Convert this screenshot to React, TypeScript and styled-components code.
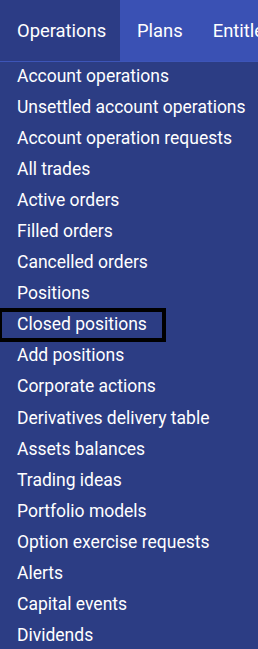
import React from 'react';
import styled, {createGlobalStyle} from "styled-components";

const GlobalStyle = createGlobalStyle`
    html, body {
        margin: 0;
        padding: 0;
        background: #2b2b2b;
        font-family: 'Roboto', 'Liberation Sans', sans-serif;
    }
`;

const PageWrapper = styled.div`
    width: 258px;
    height: 649px;
    overflow: hidden;
    display: flex;
    flex-direction: column;
`;

const TopBar = styled.nav`
    display: flex;
    height: 61px;
    flex-shrink: 0;
    background: #3a51b4;
    white-space: nowrap;
`;

const TopTab = styled.div<{ $active?: boolean }>`
    display: flex;
    align-items: center;
    padding: 0 13px 0 17px;
    font-size: 18.4px;
    color: #ffffff;
    background: ${p => p.$active ? '#2c3c85' : 'transparent'};
    width: ${p => p.$active ? '120px' : 'auto'};
    box-sizing: border-box;
    flex-shrink: 0;
`;

const Body = styled.div`
    flex: 1;
    display: flex;
`;

const LeftEdge = styled.div`
    width: 2px;
    background: #2e2e2e;
`;

const Menu = styled.ul`
    flex: 1;
    list-style: none;
    margin: 0;
    padding: 0;
    background: #2c3d84;
    box-shadow: inset 0 1px 0 #3d55b8;
`;

const MenuRow = styled.li`
    height: 31.1px;
    display: flex;
    align-items: center;
`;

const MenuLink = styled.a<{ $selected?: boolean }>`
    display: inline-block;
    height: 26px;
    line-height: 25px;
    padding: 0 15px 0 15px;
    margin-left: 2px;
    font-size: 17.5px;
    color: #ffffff;
    text-decoration: none;
    white-space: nowrap;
    outline: ${p => p.$selected ? '4px solid #000000' : 'none'};
`;

const items = [
  "Account operations",
  "Unsettled account operations",
  "Account operation requests",
  "All trades",
  "Active orders",
  "Filled orders",
  "Cancelled orders",
  "Positions",
  "Closed positions",
  "Add positions",
  "Corporate actions",
  "Derivatives delivery table",
  "Assets balances",
  "Trading ideas",
  "Portfolio models",
  "Option exercise requests",
  "Alerts",
  "Capital events",
  "Dividends",
];

const App = () => {
  return (
    <PageWrapper>
      <GlobalStyle/>
      <TopBar>
        <TopTab $active>Operations</TopTab>
        <TopTab>Plans</TopTab>
        <TopTab>Entitlements</TopTab>
      </TopBar>
      <Body>
        <LeftEdge/>
        <Menu>
          {items.map(item => (
            <MenuRow key={item}>
              <MenuLink href="#" $selected={item === "Closed positions"}>{item}</MenuLink>
            </MenuRow>
          ))}
        </Menu>
      </Body>
    </PageWrapper>
  );
};

export default App;
